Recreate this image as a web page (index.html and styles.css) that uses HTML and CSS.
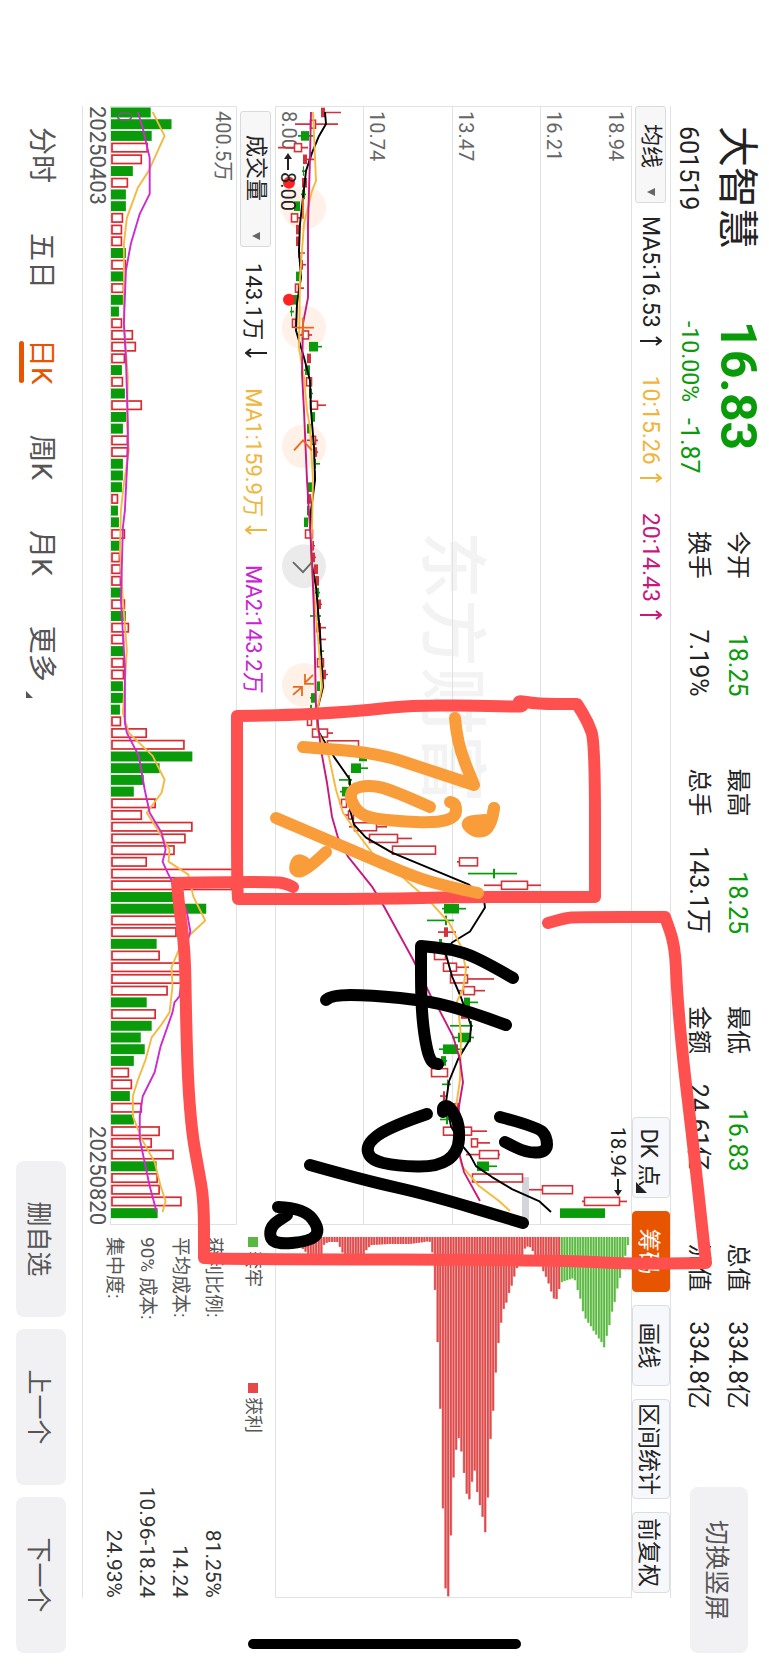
FILE: index.html
```html
<!DOCTYPE html>
<html lang="zh-CN">
<head>
<meta charset="utf-8">
<title>大智慧 601519</title>
<link rel="stylesheet" href="styles.css">
</head>
<body>
<div class="screen">
<header class="header">
<div class="stock">
<h1>大智慧</h1>
<p class="code">601519</p>
</div>
<div class="price">
<strong>16.83</strong>
<p><span class="percent">-10.00%</span><span>-1.87</span></p>
</div>
<dl class="quotes">
<div><dt>今开</dt><dd class="down">18.25</dd></div>
<div><dt>最高</dt><dd class="down">18.25</dd></div>
<div><dt>最低</dt><dd class="down">16.83</dd></div>
<div><dt>总值</dt><dd>334.8亿</dd></div>
<div><dt>换手</dt><dd>7.19%</dd></div>
<div><dt>总手</dt><dd>143.1万</dd></div>
<div><dt>金额</dt><dd>24.61亿</dd></div>
<div><dt>流值</dt><dd>334.8亿</dd></div>
</dl>
<button class="gray-button rotate-button">切换竖屏</button>
</header>

<main class="main">
<div class="bar">
<button class="picker">均线<i class="caret"></i></button>
<span class="ma black">MA5:16.53<svg class="arrow" viewBox="0 0 10 22"><path d="M5 22V1M1 6L5 1L9 6"/></svg></span>
<span class="ma yellow">10:15.26<svg class="arrow" viewBox="0 0 10 22"><path d="M5 22V1M1 6L5 1L9 6"/></svg></span>
<span class="ma pink">20:14.43<svg class="arrow" viewBox="0 0 10 22"><path d="M5 22V1M1 6L5 1L9 6"/></svg></span>
<div class="tools">
<button>DK 点<i class="corner"></i></button>
<button class="active">筹码</button>
<button>画线</button>
<button>区间统计</button>
<button>前复权</button>
</div>
</div>

<section class="kline">
<div class="watermark">东方财富</div>
<div class="rows">
<div class="row first"><span>18.94</span><span>16.21</span></div>
<div class="row"><span>13.47</span></div>
<div class="row"><span>10.74</span></div>
<div class="row"><span>8.00</span></div>
</div>
<svg id="kline" class="plot" viewBox="0 0 1119 356" preserveAspectRatio="none"></svg>
<span class="mark low"><svg viewBox="0 0 17 8"><path d="M17 4H5"/><path class="head" d="M6 0L0 4L6 8Z"/></svg>8.00</span>
<span class="mark high">18.94<svg viewBox="0 0 17 8"><path d="M0 4H12"/><path class="head" d="M11 0L17 4L11 8Z"/></svg></span>
</section>
<section class="chips">
<svg id="chips" class="plot" viewBox="0 0 373 356" preserveAspectRatio="none"></svg>
</section>

<div class="bar volume-bar">
<button class="picker wide">成交量<i class="caret"></i></button>
<span class="ma black">143.1万<svg class="arrow" viewBox="0 0 10 22"><path d="M5 0V21M1 16L5 21L9 16"/></svg></span>
<span class="ma yellow">MA1:159.9万<svg class="arrow" viewBox="0 0 10 22"><path d="M5 0V21M1 16L5 21L9 16"/></svg></span>
<span class="ma purple">MA2:143.2万</span>
</div>
<section class="volume">
<svg id="volume" class="plot" viewBox="0 0 1119 126" preserveAspectRatio="none"></svg>
<span>400.5万</span><span>0</span>
</section>
<div class="dates"><span>20250403</span><span>20250820</span></div>

<aside class="info">
<p class="legend"><span class="trapped">套牢</span><span class="profit">获利</span></p>
<dl>
<div><dt>获利比例:</dt><dd>81.25%</dd></div>
<div><dt>平均成本:</dt><dd>14.24</dd></div>
<div><dt>90% 成本:</dt><dd>10.96-18.24</dd></div>
<div><dt>集中度:</dt><dd>24.93%</dd></div>
</dl>
</aside>
</main>

<footer class="footer">
<nav class="tabs">
<a href="#">分时</a>
<a href="#">五日</a>
<a href="#" class="active">日K</a>
<a href="#">周K</a>
<a href="#">月K</a>
<a href="#" class="more">更多</a>
</nav>
<button class="gray-button">删自选</button>
<button class="gray-button">上一个</button>
<button class="gray-button">下一个</button>
</footer>
<div class="home"></div>
</div>
<svg id="notes" class="notes" viewBox="0 0 769 1665" preserveAspectRatio="none"></svg>
<script src="chart.js"></script>
</body>
</html>
```
FILE: styles.css
```css
* {
box-sizing: border-box;
}

body {
margin: 0;
height: 100vh;
position: relative;
overflow: hidden;
background: #fff;
color: #222;
font-family: Roboto, "Noto Sans CJK SC", sans-serif;
}

h1, p, dl, dd {
margin: 0;
}

button {
font-family: inherit;
color: inherit;
padding: 0;
cursor: pointer;
}

/* landscape screen turned clockwise */
.screen {
width: 100vh;
height: 100vw;
display: flex;
flex-direction: column;
transform-origin: 0 0;
transform: rotate(90deg) translateY(-100%);
white-space: nowrap;
}

.header {
height: 98px;
display: flex;
align-items: flex-start;
padding: 0 12px 0 126px;
}

.stock {
width: 195px;
}

.stock h1 {
font-size: 41px;
line-height: 64px;
font-weight: 400;
}

.code {
font-size: 25px;
line-height: 34px;
}

.price {
width: 210px;
color: #0a9b0a;
}

.price strong {
display: block;
font-size: 50px;
line-height: 62px;
font-weight: 700;
}

.price p {
display: flex;
align-items: center;
gap: 16px;
font-size: 25px;
line-height: 36px;
}

.price .percent {
font-size: 23px;
}

.quotes {
flex: 1;
display: grid;
grid-template-columns: repeat(4, 1fr);
column-gap: 72px;
padding-top: 12px;
font-size: 25px;
line-height: 39px;
}

.quotes div {
display: flex;
justify-content: space-between;
}

.quotes dt {
font-size: 24px;
}

.down {
color: #0a9b0a;
}

.gray-button {
width: 156px;
height: 50px;
border: 0;
border-radius: 8px;
background: #f1f1f3;
color: #555;
font-size: 25px;
}

.rotate-button {
width: 166px;
height: 58px;
margin: 21px 0 0 78px;
}

.main {
flex: 1;
margin: 0 67px 0 106px;
display: grid;
grid-template-columns: 3fr 1fr;
grid-template-rows: 39px 1fr 39px 126px 27px;
border-top: 1px solid #e0e2e5;
border-bottom: 1px solid #e0e2e5;
}

.bar {
grid-column: 1 / 3;
display: flex;
align-items: center;
border-bottom: 1px solid #e0e2e5;
font-size: 23px;
}

.volume-bar {
grid-column: 1;
padding-left: 5px;
font-size: 22px;
}

.picker {
width: 97px;
height: 31px;
display: flex;
align-items: center;
justify-content: space-between;
padding: 0 6px 0 17px;
margin-right: 13px;
border: 1px solid #d9dadd;
border-radius: 3px;
background: #f7f7f8;
font-size: 22px;
line-height: 28px;
}

.picker.wide {
width: 136px;
padding-left: 23px;
margin-right: 16px;
}

.caret {
border: 4px solid transparent;
border-top: 8px solid #666;
border-bottom: 0;
}

.ma {
display: flex;
align-items: center;
gap: 8px;
margin-right: 30px;
}

.black { color: #222; }
.yellow { color: #f2b53c; }
.pink { color: #c8187e; }
.purple { color: #c824d2; }

.arrow {
width: 10px;
height: 22px;
fill: none;
stroke: currentColor;
stroke-width: 2;
}

.tools {
display: flex;
gap: 13px;
margin-left: auto;
margin-right: 5px;
}

.tools button {
position: relative;
width: 81px;
height: 38px;
border: 1px solid #dcdde2;
border-radius: 4px;
background: #f7f8fb;
font-size: 23px;
}

.tools button:nth-child(4) {
width: 100px;
}

.tools .active {
background: #e85500;
border-color: #e85500;
color: #fff;
}

.corner {
position: absolute;
right: 4px;
bottom: 3px;
border-left: 11px solid transparent;
border-bottom: 11px solid #222;
}

.kline, .volume, .chips {
position: relative;
border-right: 1px solid #e0e2e5;
}

.kline, .volume {
border-left: 1px solid #e0e2e5;
}

.rows {
position: relative;
height: 100%;
display: flex;
flex-direction: column;
color: #666;
font-size: 20px;
line-height: 26px;
}

.row {
flex: 1;
display: flex;
flex-direction: column;
justify-content: flex-end;
padding-left: 4px;
border-bottom: 1px solid #dfe2e5;
}

.row.first {
justify-content: space-between;
padding-top: 2px;
}

.chips {
border-bottom: 1px solid #e0e2e5;
}

.plot {
position: absolute;
left: 0;
top: 0;
width: 100%;
height: 100%;
}

.watermark {
position: absolute;
left: 424px;
top: 50%;
font-size: 68px;
line-height: 80px;
margin-top: -38px;
font-weight: 500;
color: #f3f3f3;
}

.mark {
position: absolute;
display: flex;
align-items: center;
gap: 2px;
font-size: 20px;
line-height: 26px;
}

.mark svg {
width: 17px;
height: 8px;
stroke: #222;
stroke-width: 2;
}

.mark .head {
fill: #222;
stroke: none;
}

.mark.low {
left: 46px;
bottom: 0;
}

.mark.high {
right: 28px;
top: 0;
}

.volume {
display: flex;
flex-direction: column;
justify-content: space-between;
padding-left: 4px;
border-bottom: 1px solid #e0e2e5;
color: #666;
font-size: 20px;
line-height: 26px;
}

.volume span {
position: relative;
}

.dates {
display: flex;
justify-content: space-between;
color: #555;
font-size: 22px;
line-height: 26px;
}

.info {
grid-column: 2;
grid-row: 3 / 6;
padding-left: 12px;
color: #555;
font-size: 19px;
line-height: 34px;
}

.legend {
height: 45px;
padding-bottom: 2px;
display: flex;
font-size: 18px;
}

.legend span {
width: 146px;
display: flex;
align-items: center;
gap: 4px;
}

.legend span::before {
content: "";
width: 10px;
height: 10px;
}

.trapped::before { background: #58b840; }
.profit::before { background: #e8474a; }

.info dl div {
display: flex;
justify-content: space-between;
height: 33px;
}

.info dd {
color: #333;
font-size: 21px;
}

.footer {
height: 82px;
display: flex;
align-items: center;
gap: 12px;
padding: 0 12px 0 127px;
}

.tabs {
flex: 1;
display: flex;
gap: 50px;
}

.tabs a {
position: relative;
color: #555;
font-size: 28px;
line-height: 40px;
text-decoration: none;
}

.tabs .active {
color: #e85500;
}

.tabs .active::after {
content: "";
position: absolute;
left: 2px;
right: 2px;
bottom: -2px;
height: 5px;
border-radius: 3px;
background: #e85500;
}

.tabs .more::after {
content: "";
position: absolute;
right: -16px;
bottom: 5px;
border-left: 7px solid transparent;
border-bottom: 7px solid #555;
}

.home {
position: absolute;
right: 16px;
top: 248px;
bottom: 248px;
width: 10px;
border-radius: 5px;
background: #000;
}

.notes {
position: absolute;
left: 0;
top: 0;
width: 100%;
height: 100%;
fill: none;
stroke-width: 12;
stroke-linecap: round;
stroke-linejoin: round;
pointer-events: none;
}
```
FILE: chart.js
```js
const RED = '#d0333a';
const GREEN = '#0a9b0a';
const STEP = 11.73;

function add(parent, tag, attrs) {
const el = document.createElementNS('http://www.w3.org/2000/svg', tag);
for (const key in attrs) el.setAttribute(key, attrs[key]);
parent.appendChild(el);
return el;
}

// type, body low, body high, wick low, wick high
// r = hollow red, f = solid red, g = green
const candles = [
['f',46,50,46,66],['r',35,41,20,63],['g',26,34,23,38],['r',19,27,3,33],['f',28,32,28,39],
['g',28,29,27,31],['f',27,32,27,32],['g',27,30,26,31],['g',19,25,19,25],['r',16,23,16,26],
['f',21,25,21,25],['f',21,24,21,24],['f',23,25,23,30],['f',26,28,26,31],['g',21,25,21,25],
['r',20,24,20,29],['g',17,23,17,23],['g',16,17,15,19],['r',17,21,17,21],['r',27,34,23,37],
['g',34,43,34,47],['f',32,36,32,36],['g',30,35,29,35],['r',31,37,31,37],['g',34,37,34,38],
['r',35,43,35,51],['g',36,40,36,40],['g',32,36,32,36],['r',36,41,32,43],['f',39,42,39,43],
['g',40,41,39,45],['g',39,41,39,41],['g',33,37,33,37],['f',32,36,32,36],['g',32,34,32,34],
['g',29,33,29,33],['r',30,38,30,38],['f',37,39,37,40],['f',37,40,37,41],['f',39,43,39,43],
['f',40,44,40,44],['g',41,44,40,45],['f',42,46,42,47],['g',42,43,35,46],['f',41,46,41,51],
['f',44,46,44,51],['g',45,46,44,49],['r',42,49,42,49],['f',48,51,47,53],['g',42,45,42,45],
['g',36,41,35,41],['g',35,37,35,37],['r',32,37,32,37],['r',37,53,37,58],['r',52,84,52,84],
['g',84,92,84,92],['g',76,86,76,93],['g',73,75,64,77],['g',67,75,65,75],['r',66,72,64,73],
['r',73,79,69,80],['r',79,102,74,112],['r',94,123,94,137],['r',117,161,117,161],['r',184,203,182,203],
['g',218,220,193,242],['r',226,253,209,266],['g',200,212,196,216],['g',169,184,167,191],['g',170,172,152,179],
['f',169,173,163,181],['g',164,167,164,176],['r',159,171,159,171],['r',168,182,168,194],['r',175,193,175,219],
['r',188,200,183,210],['g',189,195,189,203],['f',186,192,186,192],['g',195,197,175,198],['g',183,196,177,199],
['g',168,183,164,190],['g',166,171,166,172],['r',156,173,156,173],['g',172,173,167,176],['f',168,170,165,172],
['f',178,184,178,184],['g',171,173,165,175],['r',168,197,168,212],['r',196,203,196,215],['r',204,224,191,225],
['g',202,214,202,222],['r',197,248,197,248],['r',267,298,254,298],['r',309,345,307,352],['g',285,330,285,330]
];

const ma5 = '5,50 17,51 29,44 46,37 64,31 91,28 117,25 144,24 171,26 197,22 224,21 251,29 274,35 304,36 341,39 374,40 404,36 454,36 481,41 527,45 581,48 601,43 623,42 635,49 651,59 674,75 704,75 719,79 732,91 747,117 779,194 794,209 802,210 826,195 837,177 849,171 871,177 892,186 920,196 934,195 954,183 976,174 997,171 1021,176 1039,186 1050,195 1061,201 1072,217 1084,237 1096,264 1107,276';
const ma10 = '5,38 74,41 84,37 117,29 171,25 241,24 271,29 304,32 321,35 374,38 421,37 454,36 507,41 581,47 601,43 623,42 651,54 684,61 707,68 727,82 747,97 771,127 797,156 817,174 841,186 864,191 884,188 896,182 911,184 931,186 974,185 1002,181 1024,180 1046,183 1061,187 1081,204 1096,224 1106,235';
const ma20 = '5,36 51,35 117,33 191,33 217,28 267,27 304,29 374,32 454,37 507,39 601,41 644,46 677,52 711,57 732,63 751,73 781,97 801,109 854,138 891,156 904,164 931,178 954,185 977,188 1001,184 1024,183 1047,184 1067,189 1096,205';

const volumes = [
'g40','g61','g41','r37','r31','g22','r17','g15','g15','r12','r11','r11','g15','r15','g13','r13','g12','g8','r11','r22',
'r25','r14','g11','r12','g14','r31','g16','g12','r17','r17','g12','g12','g11','r7','g7','g8','r14','g9','r9','r10',
'r10','g10','r14','g15','r18','r13','g13','r13','r13','g12','g12','g9','r10','r36','r74','g82','g49','g33','g23','r45',
'r31','r82','r75','r64','r36','r125','r122','g66','g96','r68','r66','g46','r49','r71','r71','r57','g36','r45','g41','g30',
'g34','g23','r18','r21','g19','r31','g23','r49','r41','r63','g46','r47','r49','r71','g47'
];
const vma1 = '5,42 29,54 64,38 81,27 111,16 137,13 171,13 217,13 271,17 317,16 344,18 377,13 404,10 444,9 494,12 544,16 607,12 627,18 650,42 674,54 687,51 707,36 724,47 744,59 756,58 769,78 791,83 815,95 829,80 845,68 862,61 881,62 907,59 919,51 932,41 954,35 975,27 991,22 1011,22 1034,31 1057,44 1081,50 1096,55 1107,52';
const vma2 = '5,27 21,32 51,39 87,39 107,29 137,20 164,15 217,13 251,15 317,17 344,17 404,14 421,12 494,10 561,14 617,14 627,16 650,28 684,34 707,39 727,51 744,55 756,52 767,57 804,76 826,80 836,77 891,69 897,64 907,62 941,50 967,44 991,32 1011,29 1034,29 1081,39 1107,46';

function drawLine(svg, data, height, color) {
const points = data.split(' ').map(p => {
const [x, y] = p.split(',');
return x + ',' + (height - y);
}).join(' ');
add(svg, 'polyline', {points, fill: 'none', stroke: color, 'stroke-width': 1.9, 'stroke-linejoin': 'round'});
}

const kline = document.querySelector('#kline');
[101, 221, 340, 460, 579].forEach((x, i) => {
add(kline, 'circle', {cx: x, cy: 327, r: 22, fill: i === 3 ? '#ebebeb' : '#fff0e8'});
});
add(kline, 'rect', {x: 1072, y: 102, width: 47, height: 7, fill: '#d3d5da'});

candles.forEach(([type, low, high, wickLow, wickHigh], i) => {
const x = 5.5 + i * STEP;
const color = type === 'g' ? GREEN : RED;
if (wickLow < low) add(kline, 'path', {d: `M${x} ${356 - low}V${356 - wickLow}`, stroke: color, 'stroke-width': 1.7});
if (wickHigh > high) add(kline, 'path', {d: `M${x} ${356 - high}V${356 - wickHigh}`, stroke: color, 'stroke-width': 1.7});
if (type === 'r') {
add(kline, 'rect', {x: x - 4, y: 356 - high + .5, width: 8, height: high - low - 1, fill: '#fff', stroke: color, 'stroke-width': 1.6});
} else {
add(kline, 'rect', {x: x - 4.8, y: 356 - high, width: 9.6, height: high - low, fill: color});
}
});
drawLine(kline, ma5, 356, '#000');
drawLine(kline, ma10, 356, '#f8b83c');
drawLine(kline, ma20, 356, '#c8187e');

// event icons on the price line
const icons = [
['M91 328H112', '#e8691c'],
['M211 328H231M221 317V336', '#e8691c'],
['M344 337L334 328L344 319', '#e8691c'],
['M456 338L466 328L456 319', '#666'],
['M569 318L577 326M568 326H578V317M589 338L581 329M581 338V329H590', '#e8691c']
];
icons.forEach(([d, stroke]) => add(kline, 'path', {d, stroke, fill: 'none', 'stroke-width': 1.8}));
[76, 193].forEach(x => add(kline, 'circle', {cx: x, cy: 342, r: 6, fill: '#f22'}));

const volume = document.querySelector('#volume');
volumes.forEach((v, i) => {
const x = 5.5 + i * STEP;
const h = Number(v.slice(1));
if (v[0] === 'r') {
add(volume, 'rect', {x: x - 4.2, y: 126.5 - h, width: 8.4, height: h - 1.5, fill: '#fff', stroke: '#d92a30', 'stroke-width': 1.7});
} else {
add(volume, 'rect', {x: x - 5, y: 126 - h, width: 10, height: h, fill: GREEN});
}
});
drawLine(volume, vma1, 126, '#f4b942');
drawLine(volume, vma2, 126, '#cb2bd0');

// price level, length of the bar
const levels = [
[27,12],[32,17],[46,17],[48,8],[52,5],[62,5],[65,12],[68,18],[89,18],[91,12],[96,8],[114,7],[134,7],[149,5],[154,4],[156,12],
[158,20],[160,64],[164,141],[167,258],[170,352],[173,361],[175,311],[177,252],[180,221],[182,199],[185,205],[187,225],
[189,239],[192,263],[195,263],[197,241],[200,232],[202,257],[205,271],[208,284],[210,297],[213,254],[215,204],[218,172],
[220,141],[223,107],[226,84],[228,73],[231,66],[233,58],[236,50],[238,43],[241,33],[244,25],[247,18],[249,12],[253,9],
[256,11],[259,17],[262,22],[265,28],[267,32],[270,38],[273,45],[275,52],[278,59],[280,66],[283,58],[285,47],[287,45],
[299,41],[301,46],[303,55],[306,64],[308,75],[311,83],[314,87],[317,91],[319,95],[322,99],[324,102],[327,106],[329,111],
[332,98],[335,86],[337,75],[340,64],[342,53],[345,41],[347,28],[350,20],[353,8]
];
const chips = document.querySelector('#chips');
let n = 0;
for (let h = 27; h < 354; h += 2.65) {
while (n < levels.length - 2 && levels[n + 1][0] < h) n++;
const [h1, w1] = levels[n];
const [h2, w2] = levels[n + 1];
const width = w1 + (w2 - w1) * (h - h1) / (h2 - h1);
const green = h > 286;
add(chips, 'rect', {x: 12, y: 356 - h - 1.3, width, height: 2.65, fill: green ? '#b4e0a4' : '#dba09c'});
add(chips, 'rect', {x: 12, y: 356 - h - .8, width, height: 1.7, fill: green ? '#58b840' : '#e8474a'});
}

// hand drawn strokes, a repeated point makes a sharp corner
const notes = document.querySelector('#notes');
const strokes = [
['#ff5050', '237,716 237,716 290,715 330,713 370,710 413,705 497,706 527,707 515,700 537,704 577,704 577,704 588,722 595,742 595,897 595,897 517,897 463,897 380,899 238,899 238,899 237,880 237,716'],
['#ff5050', '293,887 285,883 273,882 230,882 177,883 177,883 179,905 185,950 186,1017 188,1083 192,1133 198,1167 204,1200 204,1258 204,1258 230,1259 560,1260 627,1264 706,1263 706,1263 693,1143 683,1060 677,993 675,945 665,917 665,917 577,917 566,918 548,923'],
['#f99d3a', '455,718 457,743 474,785 474,785 423,768 377,753 303,747'],
['#f99d3a', '430,807 390,789 368,785 352,789 350,800 362,817 395,821 437,823 456,817 456,804 450,802'],
['#f99d3a', '494,808 491,829 476,833 464,822 485,820'],
['#f99d3a', '494,808 491,829 476,828 468,824 485,822'],
['#f99d3a', '276,818 363,855 417,878 450,887 478,893'],
['#f99d3a', '326,852 306,871 294,872 297,859 304,862'],
['#000', '513,978 477,957 450,949 421,946 421,946 421,1000 424,1035 430,1062 438,1064'],
['#000', '326,1000 331,995 370,995 430,1001 470,1012 506,1025'],
['#000', '427,1114 389,1127 366,1144 370,1160 397,1166 437,1167 458,1153 460,1125 450,1106 443,1106 443,1112'],
['#000', '500,1117 538,1127 547,1137 547,1152 527,1153 505,1142'],
['#000', '310,1165 363,1180 430,1195 523,1223'],
['#000', '278,1207 304,1208 320,1229 312,1241 272,1245 269,1227 287,1215']
];
strokes.forEach(([stroke, data]) => {
const p = data.split(' ').map(s => s.split(',').map(Number));
let d = 'M' + p[0];
for (let i = 1; i < p.length - 1; i++) {
d += `Q${p[i]} ${(p[i][0] + p[i + 1][0]) / 2} ${(p[i][1] + p[i + 1][1]) / 2}`;
}
d += 'L' + p[p.length - 1];
add(notes, 'path', {d, stroke});
});
```
